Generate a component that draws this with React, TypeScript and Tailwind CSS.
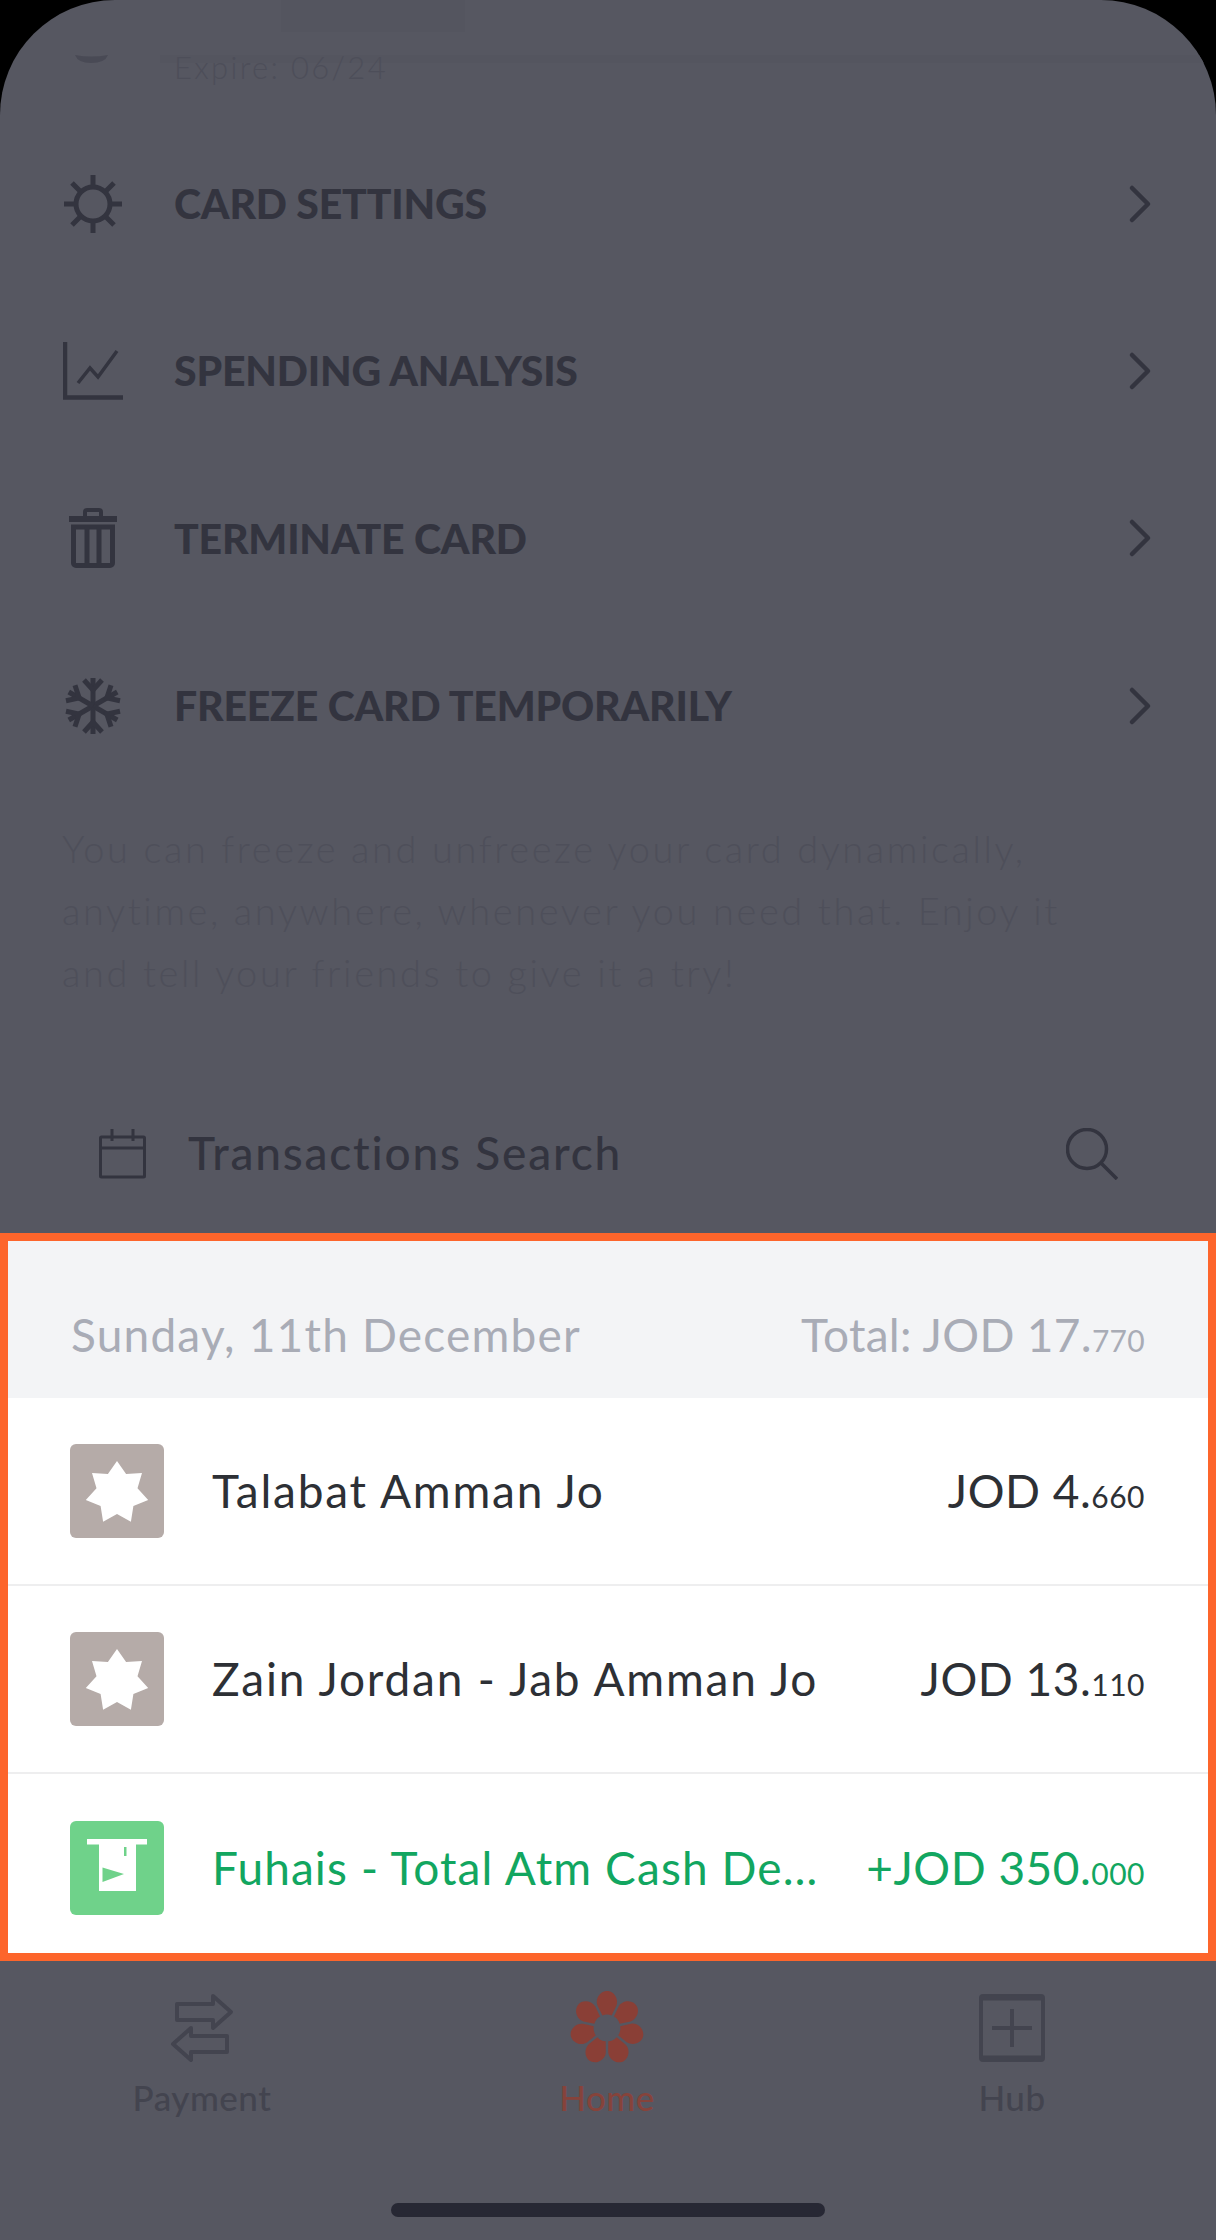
import React from 'react';
import { ChevronRight } from 'lucide-react';

const GearIcon = () => (
  <svg width="60" height="60" viewBox="0 0 60 60" fill="none" stroke="#33343f" strokeWidth="5">
    <circle cx="30" cy="30" r="17" />
    <path d="M30 1v11M30 48v11M1 30h11M48 30h11M9 9l8 8M43 43l8 8M51 9l-8 8M17 43l-8 8" />
  </svg>
);

const ChartIcon = () => (
  <svg width="60" height="58" viewBox="0 0 60 58" fill="none" stroke="#33343f" strokeWidth="4.5">
    <path d="M2 0v55.500h58" />
    <path d="M15 41l12-15 8 9L54 9" strokeWidth="3.5" />
  </svg>
);

const TrashIcon = () => (
  <svg width="48" height="60" viewBox="0 0 48 60" fill="none" stroke="#33343f">
    <path d="M16 8V4a2 2 0 012-2h12a2 2 0 012 2v4" strokeWidth="4" />
    <path d="M0 11h48" strokeWidth="6" />
    <path d="M4.500 19h39v36a2.500 2.500 0 01-2.500 2.500H7A2.500 2.500 0 014.500 55z" strokeWidth="5" />
    <path d="M18 19v38M30 19v38" strokeWidth="5" />
  </svg>
);

const SnowIcon = () => (
  <svg width="60" height="60" viewBox="0 0 60 60" fill="none" stroke="#33343f" strokeWidth="5">
    {[0, 60, 120, 180, 240, 300].map((a) => (
      <g key={a} transform={`rotate(${a} 30 30)`}>
        <path d="M30 30V2" />
        <path d="M21 4l9 10 9-10" />
      </g>
    ))}
  </svg>
);

const CalendarIcon = () => (
  <svg width="47" height="50" viewBox="0 0 47 50" fill="none" stroke="#33343f" strokeWidth="3">
    <rect x="1.500" y="8" width="44" height="40" rx="1" />
    <path d="M1.500 19h44M13 0v12M34 0v12" />
  </svg>
);

const SearchIcon = () => (
  <svg width="52" height="52" viewBox="0 0 52 52" fill="none" stroke="#33343f" strokeWidth="3.500">
    <ellipse cx="21" cy="21" rx="19.500" ry="19.500" />
    <path d="M35 35l16 16" />
  </svg>
);

const StarIcon = () => (
  <svg width="64" height="64" viewBox="-32 -32 64 64" fill="#fff" className="mt-[4px]">
    <polygon points="0,-32 9.100,-18.900 25,-20 20.500,-4.700 31.200,7.100 16.400,13.100 13.900,28.800 0,21 -13.900,28.800 -16.400,13.100 -31.200,7.100 -20.500,-4.700 -25,-20 -9.100,-18.900" />
  </svg>
);

const AtmIcon = () => (
  <svg width="60" height="52" viewBox="0 0 60 52" fill="#fff" className="mb-[6px]">
    <path d="M0 0h60v5.500H49V52H12V5.500H0z" />
    <path d="M15.500 28.500L37 35l-21.500 8z" fill="#6fd28a" />
    <path d="M37 8h2.500v9H37z" fill="#6fd28a" />
  </svg>
);

const PaymentIcon = () => (
  <svg width="66" height="68" viewBox="0 0 66 68" fill="none" stroke="#43444f" strokeWidth="4" strokeLinejoin="round">
    <path d="M8 10h36V2l18 16-18 16v-8H8z" />
    <path d="M58 42H22v-8L4 50l18 16v-8h36z" />
  </svg>
);

const HomeIcon = () => (
  <svg width="78" height="74" viewBox="-39 -37 78 74" fill="#8a3f36">
    {[0, 51.4, 102.9, 154.3, 205.7, 257.1, 308.6].map((a) => (
      <path key={a} transform={`rotate(${a})`} d="M-4.600 -12.500L-9.500 -22.500C-12 -28 -8 -36 -1 -37C6 -38 12 -30 9.500 -22.500L4.600 -12.500Q0 -14.500 -4.600 -12.500Z" />
    ))}
  </svg>
);

const HubIcon = () => (
  <svg width="66" height="68" viewBox="0 0 66 68" fill="none" stroke="#43444f" strokeWidth="4">
    <rect x="2" y="2" width="62" height="64" rx="2" />
    <path d="M2 4h62M2 64h62" strokeWidth="5" />
    <path d="M33 15v38M13 34h40" />
  </svg>
);

const menu = [
  { label: 'CARD SETTINGS', icon: GearIcon },
  { label: 'SPENDING ANALYSIS', icon: ChartIcon },
  { label: 'TERMINATE CARD', icon: TrashIcon },
  { label: 'FREEZE CARD TEMPORARILY', icon: SnowIcon },
];

const rows = [
  { name: 'Talabat Amman Jo', whole: 'JOD 4.', dec: '660', icon: 'star' },
  { name: 'Zain Jordan - Jab Amman Jo', whole: 'JOD 13.', dec: '110', icon: 'star' },
  { name: 'Fuhais - Total Atm Cash De…', whole: '+JOD 350.', dec: '000', icon: 'atm' },
];

const nav = [
  { label: 'Payment', icon: PaymentIcon, color: 'text-[#43444f]' },
  { label: 'Home', icon: HomeIcon, color: 'text-[#86433b]' },
  { label: 'Hub', icon: HubIcon, color: 'text-[#43444f]' },
];

export default function App() {
  return (
    <div className="w-[1216px] h-[2240px] bg-black overflow-hidden font-['Lato',sans-serif]">
      <div className="relative h-full bg-[#565761] rounded-t-[115px] overflow-hidden flex flex-col">
        <div className="absolute left-[281px] top-0 w-[184px] h-[32px] bg-[#54555f]" />
        <div className="absolute left-[160px] right-0 top-[55px] h-[8px] bg-[#54555f]" />

        <div className="relative h-[120px] shrink-0 flex items-start pl-[75px] pt-[48px] gap-[66px]">
          <svg width="33" height="8" viewBox="0 0 33 8" fill="#494a55" className="mt-[7px]">
            <path d="M0 0Q16 3 33 0Q30 8 16 8Q3 8 0 0Z" />
          </svg>
          <span className="text-[31px] leading-[38px] tracking-[2.3px] text-[#4d4e59] font-light">Expire: 06/24</span>
        </div>

        {menu.map((m) => (
          <div key={m.label} className="h-[167.4px] shrink-0 flex items-center pl-[63px] pr-[44px]">
            <div className="w-[60px] flex justify-center">
              <m.icon />
            </div>
            <span className="ml-[51px] text-[41px] font-black tracking-[-0.2px] text-[#33343f]">{m.label}</span>
            <ChevronRight className="ml-auto text-[#33343f]" size={64} strokeWidth={1.7} />
          </div>
        ))}

        <p className="mt-[27px] mb-[3px] h-[186px] shrink-0 px-[62px] text-[38px] leading-[62px] tracking-[2.6px] font-light text-[#4e4f5a] whitespace-pre-line">
          {'You can freeze and unfreeze your card dynamically,\nanytime, anywhere, whenever you need that. Enjoy it\nand tell your friends to give it a try!'}
        </p>

        <div className="mt-[98px] h-[100px] shrink-0 flex items-center pl-[99px] pr-[98px]">
          <CalendarIcon />
          <span className="ml-[42px] mb-[2px] text-[46px] font-medium text-[#33343f] tracking-[1.8px]">Transactions Search</span>
          <div className="ml-auto">
            <SearchIcon />
          </div>
        </div>

        <div className="mt-[29px] h-[728px] shrink-0 border-[8px] border-[#fd652b] bg-white">
          <div className="h-[157px] bg-[#f3f4f6] flex items-center justify-between pt-[30px] pl-[63px] pr-[63px] text-[46px] text-[#a9acb6]">
            <span className="tracking-[1.2px]">Sunday, 11th December</span>
            <span className="tracking-[0.3px]">
              Total: JOD 17.<span className="text-[30px]">770</span>
            </span>
          </div>
          {rows.map((r, i) => (
            <div
              key={r.name}
              className={`h-[188px] flex items-center pl-[62px] pr-[63px] ${i < 2 ? 'border-b-2 border-[#eeeeef]' : ''} ${r.icon === 'atm' ? 'text-[#12a660]' : 'text-[#2d3035]'}`}
            >
              <div className={`w-[94px] h-[94px] rounded-[6px] flex items-center justify-center shrink-0 ${r.icon === 'atm' ? 'bg-[#6fd28a]' : 'bg-[#b5aba8]'}`}>
                {r.icon === 'atm' ? <AtmIcon /> : <StarIcon />}
              </div>
              <span className={`ml-[48px] text-[46px] whitespace-nowrap ${r.icon === 'atm' ? 'tracking-[1.1px]' : 'tracking-[1.8px]'}`}>{r.name}</span>
              <span className="ml-auto text-[46px] tracking-[0.5px] whitespace-nowrap">
                {r.whole}
                <span className="text-[30px]">{r.dec}</span>
              </span>
            </div>
          ))}
        </div>

        <div className="flex-1 relative flex justify-between pl-[107px] pr-[109px] pt-[28px]">
          {nav.map((n) => (
            <div key={n.label} className={`w-[190px] flex flex-col items-center ${n.color}`}>
              <div className="h-[78px] flex items-center justify-center">
                <n.icon />
              </div>
              <span className="mt-[10px] text-[35px] leading-[40px] tracking-[0.5px] font-medium">{n.label}</span>
            </div>
          ))}
          <div className="absolute left-[391px] top-[242px] w-[434px] h-[14px] rounded-full bg-[#272834]" />
        </div>
      </div>
    </div>
  );
}
